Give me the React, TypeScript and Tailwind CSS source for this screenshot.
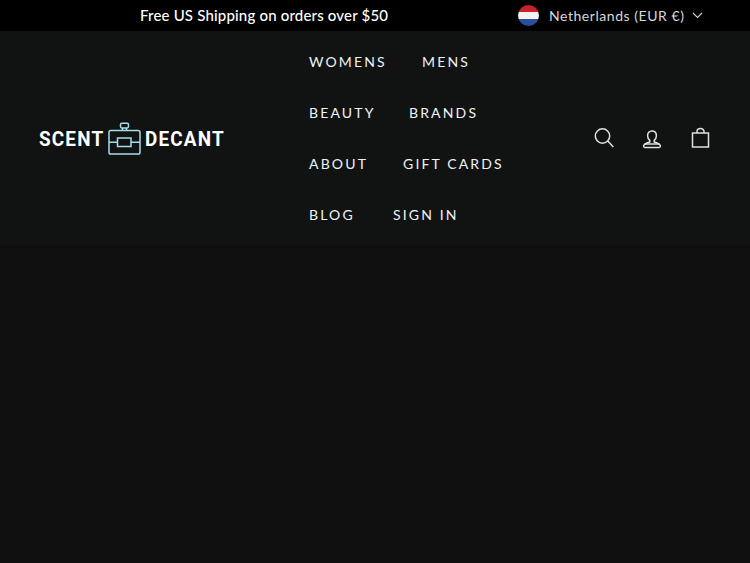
import React from 'react'

const navRows = [
  [{ label: 'WOMENS', width: 'w-[113px]' }, { label: 'MENS', width: 'w-auto' }],
  [{ label: 'BEAUTY', width: 'w-[100px]' }, { label: 'BRANDS', width: 'w-auto' }],
  [{ label: 'ABOUT', width: 'w-[94px]' }, { label: 'GIFT CARDS', width: 'w-auto' }],
  [{ label: 'BLOG', width: 'w-[84px]' }, { label: 'SIGN IN', width: 'w-auto' }],
]

function Flag() {
  return (
    <div className="w-[21px] h-[21px] rounded-full overflow-hidden flex flex-col">
      <div className="h-[7px] bg-[#c8202f]" />
      <div className="h-[7px] bg-[#f2f2f2]" />
      <div className="h-[7px] bg-[#2a4f9e]" />
    </div>
  )
}

function LogoMark() {
  return (
    <svg width="33" height="33" viewBox="0 0 33 33" fill="none" stroke="#a5dcec" strokeWidth="1.5">
      <rect x="12.5" y="1.2" width="8" height="4.8" rx="1.4" />
      <path d="M14.500 6v2.500M18.500 6v2.500" />
      <rect x="1" y="8.500" width="31" height="23.500" rx="1.800" />
      <rect x="9.500" y="16" width="13.500" height="8.500" />
      <path d="M1 20.200h8.500M23 20.200h9" />
    </svg>
  )
}

export default function App() {
  return (
    <div className="w-[750px] h-[563px] overflow-hidden bg-[#0f0f0f] font-['Lato',sans-serif] text-white">
      {/* announcement bar */}
      <div className="h-[31px] bg-black flex items-center">
        <p className="ml-[140px] w-[249px] whitespace-nowrap text-[15px] font-medium tracking-[0.18px] text-white">
          Free US Shipping on orders over $50
        </p>
        <div className="ml-[129px] flex items-center">
          <Flag />
          <span className="ml-[10px] w-[137px] whitespace-nowrap text-[14px] tracking-[0.55px] text-[#d8d8d8]">Netherlands (EUR €)</span>
          <svg className="ml-[6px]" width="11" height="7" viewBox="0 0 11 7" fill="none" stroke="#d0d0d0" strokeWidth="1.1">
            <path d="M1 1l4.500 4.500L10 1" />
          </svg>
        </div>
      </div>

      {/* main header */}
      <header className="h-[214px] bg-[#111312] flex items-center">
        <div className="ml-[39px] w-[270px] flex items-center">
          <span className="w-[69px] pt-[2px] origin-left scale-x-90 font-['Roboto',sans-serif] text-[21px] font-bold tracking-[1.3px] leading-none whitespace-nowrap">SCENT</span>
          <LogoMark />
          <span className="ml-[4px] pt-[2px] origin-left scale-x-90 font-['Roboto',sans-serif] text-[21px] font-bold tracking-[1.3px] leading-none whitespace-nowrap">DECANT</span>
        </div>

        <nav className="w-[270px] flex flex-col">
          {navRows.map((row) => (
            <div key={row[0].label} className="h-[51px] flex items-center">
              {row.map((item) => (
                <span key={item.label} className={`${item.width} whitespace-nowrap text-[14px] tracking-[2.15px] text-[#eef3f6]`}>
                  {item.label}
                </span>
              ))}
            </div>
          ))}
        </nav>

        <div className="ml-[14px] flex items-center gap-[24px]">
          <svg width="24" height="24" viewBox="0 0 24 24" fill="none" stroke="#e0e0e0" strokeWidth="1.5">
            <circle cx="9.500" cy="10" r="7.200" />
            <path d="M14.800 15l5.500 6" />
          </svg>
          <svg width="24" height="24" viewBox="0 0 24 24" fill="none" stroke="#e0e0e0" strokeWidth="1.5">
            <path d="M11 5c-2.800 0-4.400 2-4.400 4.800 0 2 .9 3.600 2.200 4.600v1.600c-2.500.7-5.300 1.800-6 3.400-.4 1 0 2 1 2h14.400c1 0 1.400-1 1-2-.7-1.600-3.500-2.700-6-3.400v-1.600c1.300-1 2.200-2.600 2.200-4.600 0-2.800-1.600-4.800-4.400-4.800z" />
            <path d="M3.500 18h15" />
          </svg>
          <svg width="24" height="24" viewBox="0 0 24 24" fill="none" stroke="#e0e0e0" strokeWidth="1.500">
            <rect x="3.500" y="7" width="16" height="14" />
            <path d="M8 7V5.500a3.500 3 0 0 1 7 0V7" />
          </svg>
        </div>
      </header>
    </div>
  )
}
